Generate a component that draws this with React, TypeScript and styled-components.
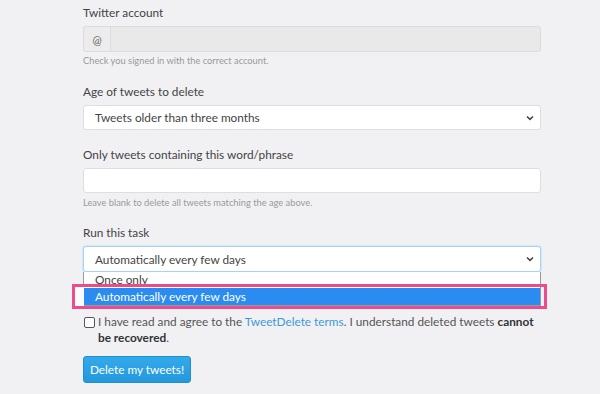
import React from "react";
import styled, { createGlobalStyle } from "styled-components";

const Global = createGlobalStyle`
  html, body { margin: 0; padding: 0; }
  body {
    background: #f1f1f3;
    font-family: Lato, "Open Sans", "Liberation Sans", sans-serif;
    color: #444;
    width: 600px;
    height: 394px;
    overflow: hidden;
  }
`;

const Page = styled.div`
  padding: 4px 0 0 83px;
  width: 458px;
`;

const Group = styled.div<{ $mb: number }>`
  display: flex;
  flex-direction: column;
  margin-bottom: ${(p) => p.$mb}px;
  position: relative;
`;

const Label = styled.label`
  font-size: 11.8px;
  line-height: 18px;
  color: #444;
  margin-bottom: 4px;
`;

const InputGroup = styled.div`
  display: flex;
  height: 26px;
  box-sizing: border-box;
`;

const Addon = styled.span`
  width: 27px;
  box-sizing: border-box;
  border: 1px solid #dcdcdc;
  border-right: none;
  border-radius: 3px 0 0 3px;
  background: #ececec;
  color: #666;
  font-size: 11px;
  display: flex;
  align-items: center;
  justify-content: center;
`;

const DisabledInput = styled.div`
  flex: 1;
  border: 1px solid #dcdcdc;
  border-radius: 0 3px 3px 0;
  background: #e9e9ea;
`;

const TextInput = styled.div`
  height: 25px;
  box-sizing: border-box;
  border: 1px solid #dedede;
  border-radius: 3px;
  background: #fff;
`;

const Help = styled.div<{ $mt: number }>`
  font-size: 9.3px;
  line-height: 12px;
  color: #999;
  margin-top: ${(p) => p.$mt}px;
`;

const Select = styled.div<{ $focus?: boolean; $h: number }>`
  height: ${(p) => p.$h}px;
  box-sizing: border-box;
  border: 1px solid ${(p) => (p.$focus ? "#a9d2ee" : "#dedede")};
  box-shadow: ${(p) => (p.$focus ? "0 0 0 1px #d2e8f6" : "none")};
  border-radius: 3px;
  background: #fff;
  display: flex;
  align-items: center;
  justify-content: space-between;
  padding: 0 6px 0 11px;
  font-size: 11.8px;
  color: #444;
`;

const Chevron = () => (
  <svg width="8" height="6" viewBox="0 0 8 6">
    <path d="M1 1.5 L4 4.4 L7 1.5" fill="none" stroke="#444" strokeWidth="1.5" />
  </svg>
);

const List = styled.div`
  position: absolute;
  left: 0;
  right: 0;
  top: 100%;
  background: #fff;
  border: 1px solid #9a9a9a;
  border-top: none;
  box-sizing: border-box;
  z-index: 2;
`;

const Option = styled.div<{ $active?: boolean }>`
  height: ${(p) => (p.$active ? 17 : 16)}px;
  line-height: ${(p) => (p.$active ? 17 : 16)}px;
  padding-left: 11px;
  font-size: 11.8px;
  color: ${(p) => (p.$active ? "#fff" : "#444")};
  background: ${(p) => (p.$active ? "#2a8cf0" : "#fff")};
  position: relative;
`;

const Highlight = styled.div`
  position: absolute;
  left: -12px;
  right: -7px;
  top: -4px;
  bottom: -4px;
  border: 3px solid #ec4b8c;
  pointer-events: none;
`;

const HighlightGap = styled.div`
  position: absolute;
  left: -9px;
  width: 9px;
  top: -1px;
  bottom: -1px;
  background: #fafafa;
`;

const Agree = styled.div`
  display: flex;
  gap: 3px;
  font-size: 11.8px;
  line-height: 16px;
  color: #555;
  margin-bottom: 10px;
`;

const Check = styled.span`
  flex: none;
  width: 9px;
  height: 9px;
  margin-top: 3px;
  margin-left: 1px;
  border: 1px solid #555;
  border-radius: 2px;
  background: #fff;
`;

const Link = styled.a`
  color: #3b9ad8;
  text-decoration: none;
`;

const Strong = styled.b`
  color: #333;
  font-weight: 700;
`;

const Button = styled.button`
  width: 108px;
  height: 27px;
  border: 1px solid #1d8fd3;
  border-radius: 3px;
  background: linear-gradient(#34a9ea, #2398dc);
  color: #fff;
  font-family: Lato, "Open Sans", "Liberation Sans", sans-serif;
  font-size: 11.8px;
  padding: 0;
`;

export default function App() {
  return (
    <>
      <Global />
      <Page>
        <Group $mb={16}>
          <Label>Twitter account</Label>
          <InputGroup>
            <Addon>@</Addon>
            <DisabledInput />
          </InputGroup>
          <Help $mt={3}>Check you signed in with the correct account.</Help>
        </Group>
        <Group $mb={16}>
          <Label>Age of tweets to delete</Label>
          <Select $h={25}>
            <span>Tweets older than three months</span>
            <Chevron />
          </Select>
        </Group>
        <Group $mb={15}>
          <Label>Only tweets containing this word/phrase</Label>
          <TextInput />
          <Help $mt={4}>Leave blank to delete all tweets matching the age above.</Help>
        </Group>
        <Group $mb={42}>
          <Label>Run this task</Label>
          <div style={{ position: "relative" }}>
            <Select $focus $h={26}>
              <span>Automatically every few days</span>
              <Chevron />
            </Select>
            <List>
              <Option>Once only</Option>
              <Option $active>
                <HighlightGap />
                Automatically every few days
                <Highlight />
              </Option>
            </List>
          </div>
        </Group>
        <Agree>
          <Check />
          <span>
            I have read and agree to the <Link>TweetDelete terms</Link>. I understand deleted tweets{" "}
            <Strong>cannot be recovered</Strong>.
          </span>
        </Agree>
        <Button>Delete my tweets!</Button>
      </Page>
    </>
  );
}
